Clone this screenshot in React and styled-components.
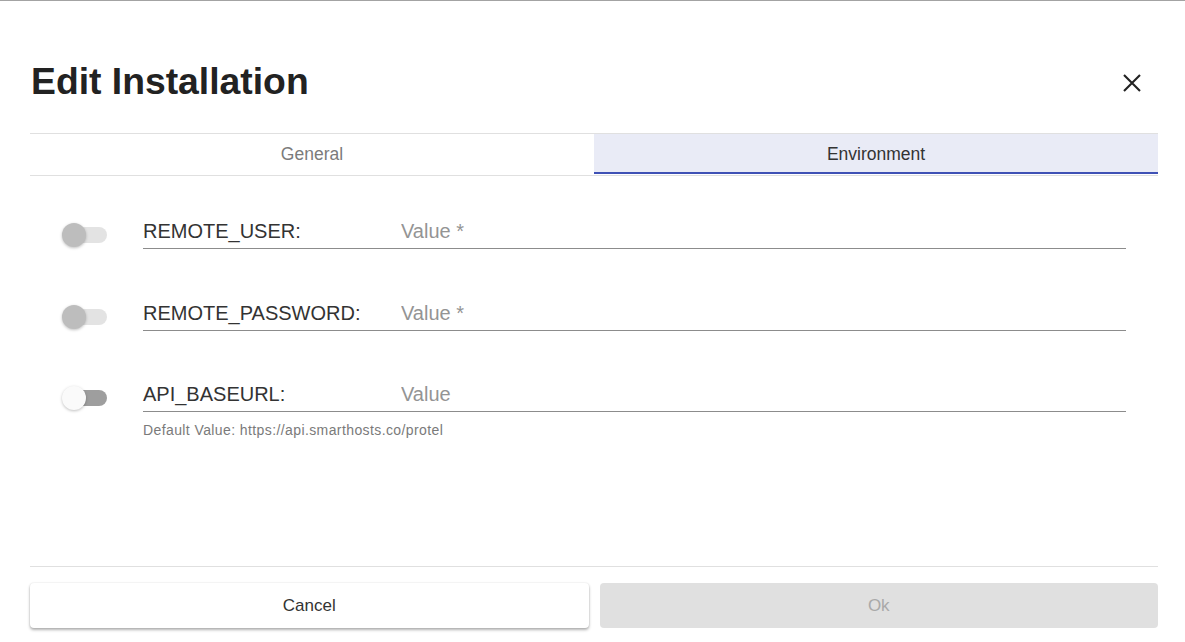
import React, {useState} from 'react'
import styled, {createGlobalStyle} from 'styled-components'

const GlobalStyle = createGlobalStyle`
  html, body {
    margin: 0;
    padding: 0;
    background: #fff;
  }
  * {
    box-sizing: border-box;
  }
  body {
    font-family: "Liberation Sans", Arial, Helvetica, sans-serif;
    color: #333;
  }
`

const Dialog = styled.div`
  height: 642px;
  display: flex;
  flex-direction: column;
  border-top: 1px solid #a3a3a3;
  padding: 0 27px 0 30px;
  background: #fff;
`

const Header = styled.div`
  display: flex;
  justify-content: space-between;
  align-items: flex-start;
  padding-top: 59px;
  height: 132px;
`

const Title = styled.h1`
  margin: 0 0 0 1px;
  font-size: 37.3px;
  line-height: 43px;
  font-weight: 700;
  color: #222;
`

const CloseButton = styled.button`
  width: 34px;
  height: 34px;
  margin: 6px 9px 0 0;
  padding: 0;
  border: none;
  background: transparent;
  display: flex;
  align-items: center;
  justify-content: center;
  cursor: pointer;
`

const TabBar = styled.div`
  display: grid;
  grid-template-columns: 1fr 1fr;
  border-top: 1px solid #e0e0e0;
  border-bottom: 1px solid #e0e0e0;
  padding-bottom: 1px;
`

const Tab = styled.div`
  height: 40px;
  display: flex;
  align-items: center;
  justify-content: center;
  font-size: 17.5px;
  color: ${p => (p.$active ? '#333' : '#7b7b7b')};
  background: ${p => (p.$active ? '#e9ebf6' : 'transparent')};
  box-shadow: ${p => (p.$active ? 'inset 0 -2px 0 #3f51b5' : 'none')};
  cursor: pointer;
`

const Content = styled.div`
  flex: 1;
  padding: 40px 32px 0 32px;
  display: flex;
  flex-direction: column;
  gap: 48.5px;
`

const Row = styled.div`
  display: flex;
  align-items: flex-start;
  gap: 36px;
`

const SwitchBox = styled.div`
  position: relative;
  width: 45px;
  height: 24px;
  margin-top: 7px;
  flex-shrink: 0;
  cursor: pointer;
`

const Track = styled.div`
  position: absolute;
  left: 3px;
  top: 4px;
  width: 42px;
  height: 16px;
  border-radius: 8px;
  background: ${p => (p.$dark ? '#9e9e9e' : '#e3e3e3')};
`

const Thumb = styled.div`
  position: absolute;
  left: 0;
  top: 0;
  width: 24px;
  height: 24px;
  border-radius: 50%;
  background: ${p => (p.$light ? '#fafafa' : '#bdbdbd')};
  box-shadow: 0 1px 3px rgba(0, 0, 0, 0.25);
`

const FieldWrap = styled.div`
  flex: 1;
  display: flex;
  flex-direction: column;
`

const Field = styled.label`
  display: flex;
  align-items: center;
  height: 33px;
  padding-bottom: 2px;
  border-bottom: 1px solid #8c8c8c;
  font-size: 20px;
  line-height: 30px;
`

const FieldLabel = styled.span`
  width: 258px;
  flex-shrink: 0;
  color: #333;
`

const Input = styled.input`
  flex: 1;
  border: none;
  outline: none;
  background: transparent;
  font: inherit;
  color: #333;
  padding: 0;
  &::placeholder {
    color: #949494;
  }
`

const Helper = styled.div`
  margin-top: 10px;
  font-size: 14px;
  letter-spacing: 0.4px;
  line-height: 16px;
  color: #7a7a7a;
`

const Footer = styled.div`
  border-top: 1px solid #e0e0e0;
  padding: 16px 0 14px;
  display: grid;
  grid-template-columns: 1fr 1fr;
  gap: 11px;
`

const Button = styled.button`
  height: 45px;
  border: none;
  border-radius: 4px;
  font-family: inherit;
  font-size: 17px;
  color: ${p => (p.disabled ? '#a9a9a9' : '#333')};
  background: ${p => (p.disabled ? '#e0e0e0' : '#fff')};
  box-shadow: ${p => (p.disabled ? 'none' : '0 2px 3px rgba(0,0,0,0.3), 0 0 2px rgba(0,0,0,0.12)')};
  cursor: ${p => (p.disabled ? 'default' : 'pointer')};
`

const vars = [
    {name: 'REMOTE_USER:', placeholder: 'Value *'},
    {name: 'REMOTE_PASSWORD:', placeholder: 'Value *'},
    {name: 'API_BASEURL:', placeholder: 'Value', def: 'https://api.smarthosts.co/protel', optional: true},
]

const Switch = ({optional}) => (
    <SwitchBox>
        <Track $dark={optional}/>
        <Thumb $light={optional}/>
    </SwitchBox>
)

const App = () => {
    const [tab, setTab] = useState(1)

    return (
        <>
            <GlobalStyle/>
            <Dialog>
                <Header>
                    <Title>Edit Installation</Title>
                    <CloseButton aria-label='close'>
                        <svg width='18' height='18' viewBox='0 0 18 18'>
                            <path d='M1 1 L17 17 M17 1 L1 17' stroke='#222' strokeWidth='2.1' fill='none'/>
                        </svg>
                    </CloseButton>
                </Header>
                <TabBar>
                    <Tab $active={tab === 0} onClick={() => setTab(0)}>General</Tab>
                    <Tab $active={tab === 1} onClick={() => setTab(1)}>Environment</Tab>
                </TabBar>
                <Content>
                    {vars.map((v) => (
                        <Row key={v.name}>
                            <Switch optional={v.optional}/>
                            <FieldWrap>
                                <Field>
                                    <FieldLabel>{v.name}</FieldLabel>
                                    <Input placeholder={v.placeholder}/>
                                </Field>
                                {v.def && <Helper>Default Value: {v.def}</Helper>}
                            </FieldWrap>
                        </Row>
                    ))}
                </Content>
                <Footer>
                    <Button>Cancel</Button>
                    <Button disabled>Ok</Button>
                </Footer>
            </Dialog>
        </>
    )
}

export default App
